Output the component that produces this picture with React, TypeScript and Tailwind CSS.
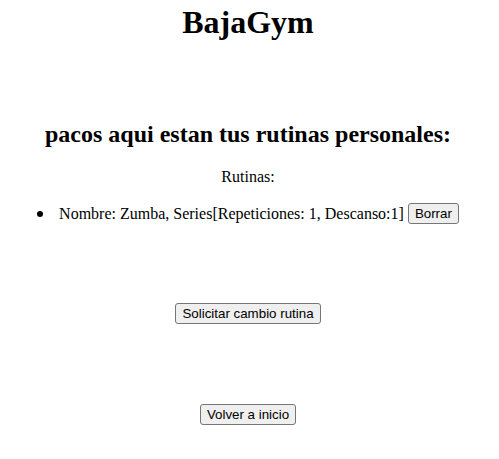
function Btn({ children }: { children: React.ReactNode }) {
  return (
    <button className="h-[21px] px-[6px] border border-[#767676] rounded-[3px] bg-[#efefef] text-black font-['Liberation_Sans',Arial,sans-serif] text-[13.33px] leading-[15px]">
      {children}
    </button>
  );
}

export default function App() {
  return (
    <div className="min-h-screen bg-white text-black text-center pr-[3px] font-['Liberation_Serif','Times_New_Roman',serif]">
      <h1 className="pt-[4px] text-[32px] leading-[37px] font-bold">BajaGym</h1>

      <h2 className="mt-[79px] text-[24px] leading-[28px] font-bold">
        pacos aqui estan tus rutinas personales:
      </h2>

      <p className="mt-[20px] text-[16px] leading-[18px]">Rutinas:</p>

      <div className="mt-[17px] flex justify-center items-center text-[16px] leading-[18px]">
        <span className="w-[6px] h-[6px] rounded-full bg-black mr-[16px]" />
        <span>Nombre: Zumba, Series[Repeticiones: 1, Descanso:1]</span>
        <span className="ml-[4px] flex">
          <Btn>Borrar</Btn>
        </span>
      </div>

      <div className="mt-[79px] flex justify-center">
        <Btn>Solicitar cambio rutina</Btn>
      </div>

      <div className="mt-[80px] flex justify-center">
        <Btn>Volver a inicio</Btn>
      </div>
    </div>
  );
}
